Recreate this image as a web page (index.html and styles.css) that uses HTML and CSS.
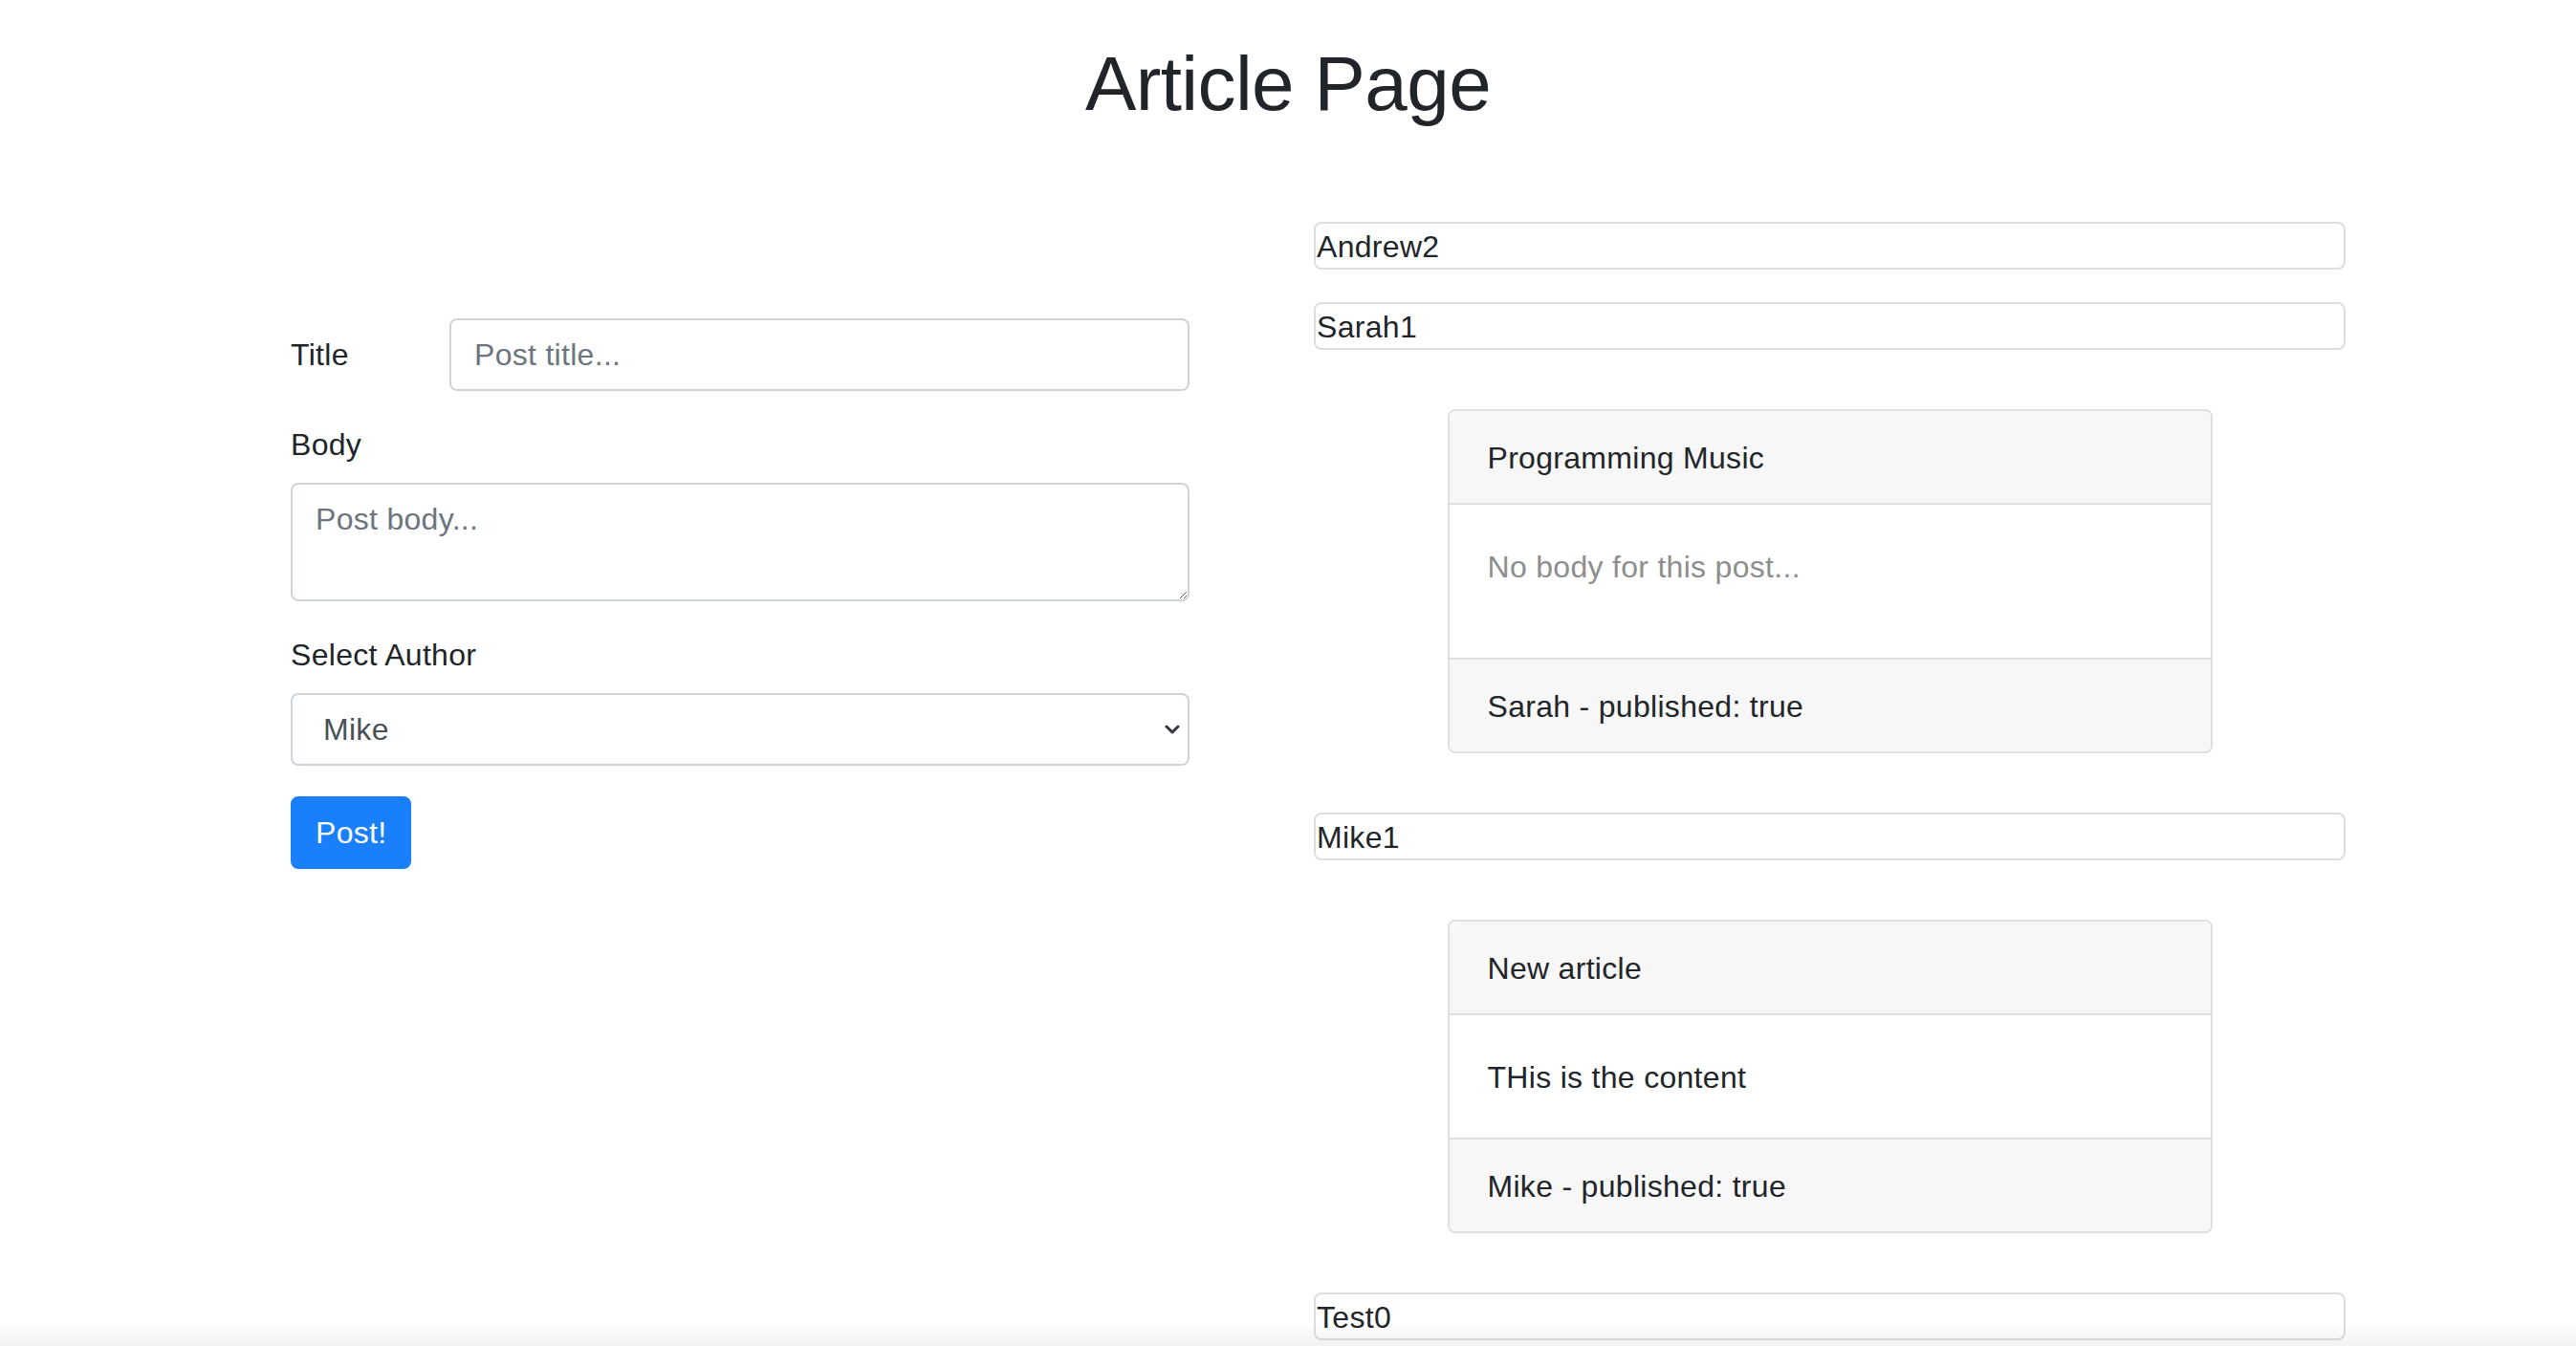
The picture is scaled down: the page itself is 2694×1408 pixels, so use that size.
FILE: index.html
```html
<!DOCTYPE html>
<html lang="en">
<head>
<meta charset="utf-8">
<title>Article Page</title>
<link rel="stylesheet" href="styles.css">
</head>
<body>
<h1 class="page-title">Article Page</h1>
<div class="layout">
  <form class="post-form">
    <div class="form-row-inline">
      <label class="inline-label" for="title">Title</label>
      <input class="form-control" id="title" type="text" placeholder="Post title...">
    </div>
    <div class="form-group">
      <label class="block-label" for="body">Body</label>
      <textarea class="form-control textarea" id="body" rows="2" placeholder="Post body..."></textarea>
    </div>
    <div class="form-group">
      <label class="block-label" for="author">Select Author</label>
      <div class="select-wrap">
        <select class="form-control select" id="author">
          <option>Mike</option>
          <option>Sarah</option>
          <option>Andrew</option>
          <option>Test</option>
        </select>
        <svg class="chevron" width="16" height="12" viewBox="0 0 16 12" aria-hidden="true"><path d="M2 3 L8 9 L14 3" fill="none" stroke="#343a40" stroke-width="3" stroke-linecap="round" stroke-linejoin="round"/></svg>
      </div>
    </div>
    <button class="btn-primary" type="button">Post!</button>
  </form>

  <div class="authors">
    <div class="author-box">Andrew2</div>
    <div class="author-box">Sarah1</div>
    <div class="card">
      <div class="card-header">Programming Music</div>
      <div class="card-body"><p class="muted">No body for this post...</p></div>
      <div class="card-footer">Sarah - published: true</div>
    </div>
    <div class="author-box">Mike1</div>
    <div class="card">
      <div class="card-header">New article</div>
      <div class="card-body"><span>THis is the content</span></div>
      <div class="card-footer">Mike - published: true</div>
    </div>
    <div class="author-box">Test0</div>
  </div>
</div>
<div class="bottom-fade"></div>
</body>
</html>
```

FILE: styles.css
```css
* { box-sizing: border-box; }

html, body {
  margin: 0;
  padding: 0;
  background: #ffffff;
}

body {
  font-family: "Liberation Sans", Arial, Helvetica, sans-serif;
  font-size: 32px;
  line-height: 1.5;
  color: #212529;
  letter-spacing: 0.3px;
}

.page-title {
  margin: 40px 0 96px;
  font-size: 80px;
  font-weight: 500;
  line-height: 96px;
  text-align: center;
  color: #212529;
  letter-spacing: -0.6px;
}

.layout {
  display: grid;
  grid-template-columns: 940px 1079px;
  column-gap: 130px;
  padding-left: 304px;
  align-items: start;
}

.post-form {
  padding-top: 101px;
  margin: 0;
}

.form-row-inline {
  display: flex;
  align-items: center;
  margin-bottom: 32px;
}

.inline-label {
  width: 166px;
  flex: none;
}

.form-group {
  margin-bottom: 32px;
}

.block-label {
  display: block;
  margin-bottom: 16px;
}

.form-control {
  display: block;
  width: 100%;
  height: 76px;
  padding: 12px 24px;
  font-family: inherit;
  font-size: 32px;
  line-height: 48px;
  letter-spacing: 0.3px;
  color: #495057;
  background: #fff;
  border: 2px solid #ced4da;
  border-radius: 8px;
  outline: none;
}

.form-row-inline .form-control {
  flex: 1;
  width: auto;
}

.form-control::placeholder {
  color: #6c757d;
  opacity: 1;
}

.textarea {
  height: 124px;
  resize: vertical;
}

.select-wrap {
  position: relative;
}

.select {
  appearance: none;
  -webkit-appearance: none;
  padding-left: 32px;
  padding-right: 60px;
}

.chevron {
  position: absolute;
  right: 10px;
  top: 32px;
  pointer-events: none;
}

.btn-primary {
  display: inline-block;
  height: 76px;
  padding: 12px 24px;
  font-family: inherit;
  font-size: 32px;
  line-height: 48px;
  letter-spacing: 0.3px;
  color: #fff;
  background: #1a7ffb;
  border: 2px solid #1a7ffb;
  border-radius: 8px;
  cursor: pointer;
}

.authors {
  display: flex;
  flex-direction: column;
}

.author-box {
  height: 50px;
  border: 2px solid #dedede;
  border-radius: 8px;
  padding-top: 2px;
  line-height: 44px;
  padding-left: 1px;
  margin-bottom: 34px;
  color: #212529;
}

.card {
  width: 800px;
  margin: 28px auto 62px;
  border: 2px solid #dfdfdf;
  border-radius: 8px;
  overflow: hidden;
  background: #fff;
}

.card-header,
.card-footer {
  padding: 25px 40px 23px;
  background: #f7f7f7;
  line-height: 48px;
}

.card-header {
  border-bottom: 2px solid #dfdfdf;
}

.card-footer {
  border-top: 2px solid #dfdfdf;
}

.card-body {
  padding: 41px 40px 39px;
  line-height: 48px;
}

.card-body p {
  margin: 0 0 32px;
}

.muted {
  color: #8e8e8e;
}

.bottom-fade {
  position: fixed;
  left: 0;
  right: 0;
  bottom: 0;
  height: 26px;
  background: linear-gradient(to bottom, rgba(0,0,0,0), rgba(0,0,0,0.05));
  pointer-events: none;
}
```
